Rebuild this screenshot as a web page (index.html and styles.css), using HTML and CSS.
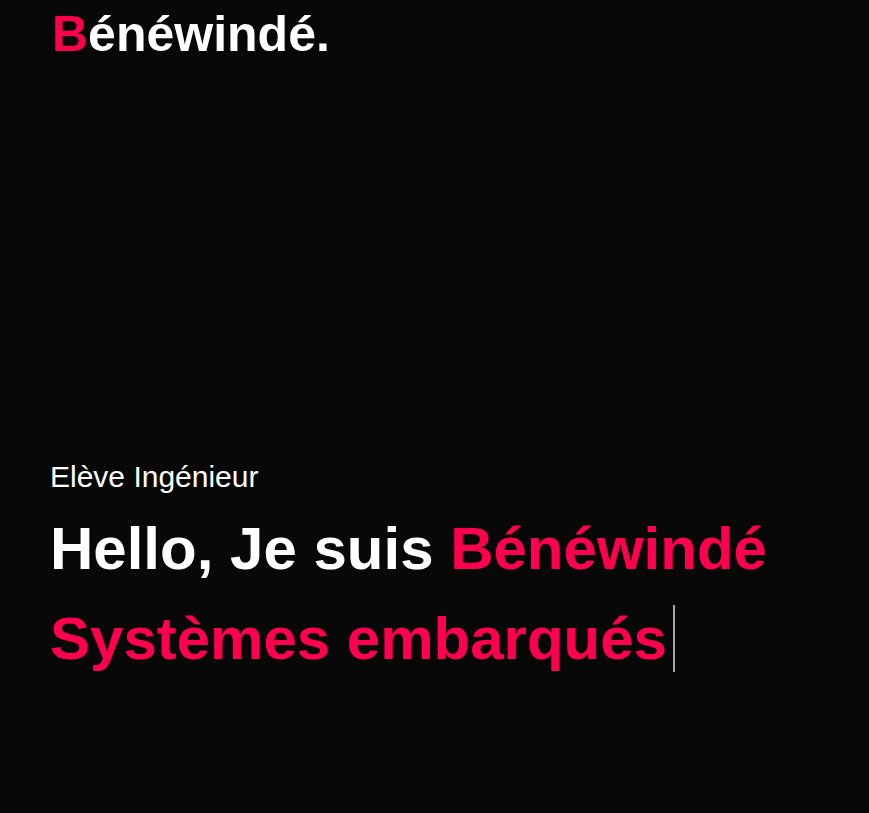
FILE: index.html
```html
<!DOCTYPE html>
<html lang="fr">
<head>
<meta charset="utf-8">
<title>Bénéwindé</title>
<link rel="stylesheet" href="styles.css">
</head>
<body>
<header class="header">
  <a class="logo" href="#"><span class="accent">B</span>énéwindé.</a>
</header>
<section class="hero">
  <p class="hero-sub">Elève Ingénieur</p>
  <h1 class="hero-title">Hello, Je suis <span class="accent">Bénéwindé</span><br><span class="typed accent">Systèmes embarqués</span></h1>
</section>
</body>
</html>
```

FILE: styles.css
```css
html, body {
  margin: 0;
  padding: 0;
  background: #080808;
  height: 100%;
}
body {
  font-family: "Liberation Sans", Arial, sans-serif;
  color: #ffffff;
  overflow: hidden;
}
.accent {
  color: #ff004f;
}
.header {
  padding: 6px 0 0 52px;
}
.logo {
  font-size: 50px;
  font-weight: 700;
  line-height: 1.15;
  color: #ffffff;
  text-decoration: none;
  display: inline-block;
}
.hero {
  padding: 396px 0 0 50px;
}
.hero-sub {
  margin: 0;
  font-size: 30px;
  line-height: 1.15;
  font-weight: 400;
}
.hero-title {
  margin: 10px 0 0;
  font-size: 60px;
  line-height: 90px;
  font-weight: 700;
}
.typed {
  border-right: 2px solid #a9a9a9;
  padding-right: 6px;
}
```
